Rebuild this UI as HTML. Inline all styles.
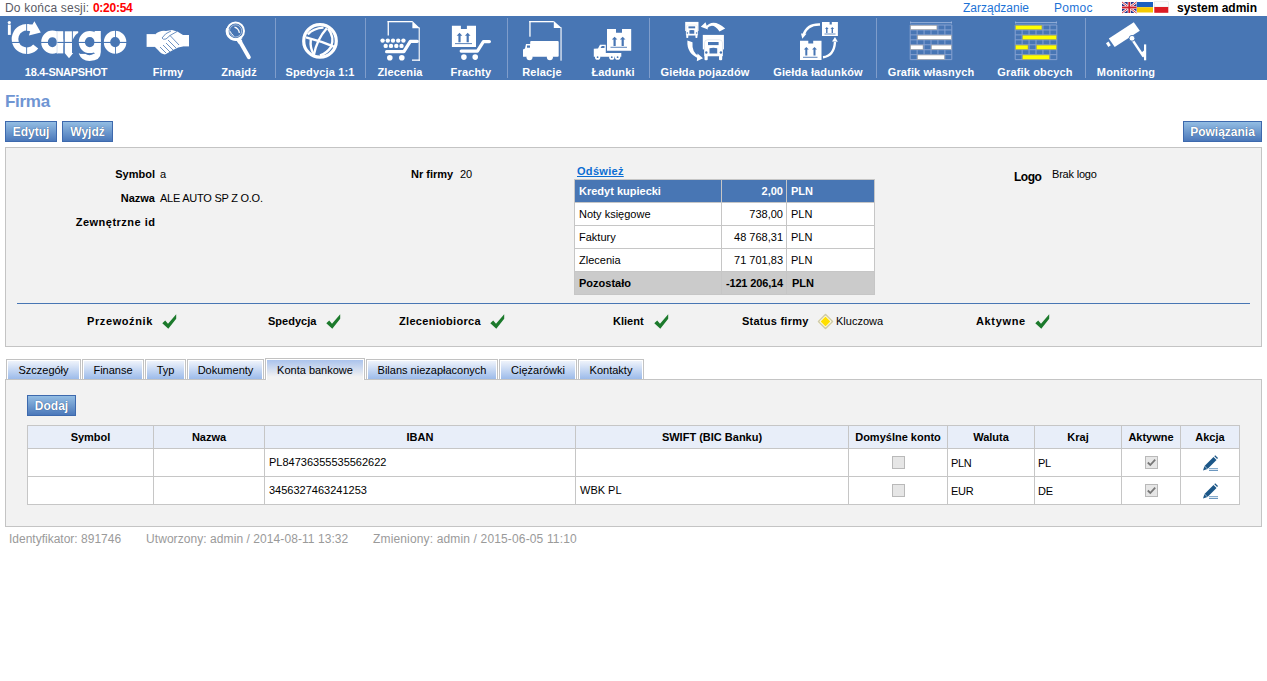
<!DOCTYPE html>
<html><head><meta charset="utf-8">
<style>
*{margin:0;padding:0;box-sizing:border-box}
html,body{width:1267px;height:681px;overflow:hidden;background:#fff;font-family:"Liberation Sans",sans-serif;color:#000}
.abs{position:absolute;white-space:nowrap}
#top{position:absolute;left:0;top:0;width:1267px;height:16px}
#nav{position:absolute;left:0;top:16px;width:1267px;height:64px;background:#4876b4}
.sep{position:absolute;top:2px;width:1px;height:60px;background:#7f9dcb}
.nl{position:absolute;top:50px;letter-spacing:0.15px;font-weight:bold;font-size:11px;color:#fff;white-space:nowrap;line-height:13px;transform:translateX(-50%)}
.ic{position:absolute}
.btn{position:absolute;height:21px;border:1px solid #3d69ad;background:linear-gradient(#93bde3,#4b78ba);color:#fff;font-weight:bold;font-size:12px;line-height:21px;text-align:center;text-shadow:0 0 1px #1f3f73}
.panel{position:absolute;background:#f2f2f2;border:1px solid #c4c4c4}
.lbl{position:absolute;font-weight:bold;font-size:11px;line-height:13px;white-space:nowrap}
.val{position:absolute;font-size:11px;line-height:13px;white-space:nowrap}
.tab{position:absolute;top:359px;height:20px;border:1px solid #c2c2c2;border-bottom:none;background:linear-gradient(#f3f6fc,#9cbbea);box-shadow:inset 1px 1px 0 #fff,inset -1px 0 0 #fff;font-size:11px;line-height:21px;text-align:center;white-space:nowrap}
.tab.act{top:358px;height:22px;background:linear-gradient(#a6c0ec,#f2f2f2 85%);line-height:23px}
table{border-collapse:collapse}
#kt td{white-space:nowrap;border:1px solid #c6c6c6;background:#fff;height:23px;padding:0 4px;line-height:13px}
#kt td.r{text-align:right;padding-right:3px}
#kt tr.h td{background:#4876b4;color:#fff;font-weight:bold}
#kt tr.f td{background:#cbcbcb;font-weight:bold}
.chk{position:absolute;top:314px;width:15px;height:15px}
#bt th{background:#e8eef9;border:1px solid #c6c6c6;height:23px;font-weight:bold;text-align:center;padding:0}
#bt td{background:#fff;border:1px solid #c6c6c6;height:28px;padding:0 4px 2px}
#bt td.c{text-align:center;padding:0}
#bt td.t{padding:1px 0 0 3px;letter-spacing:-0.3px}
.cb{display:inline-block;width:13px;height:13px;border:1px solid #b9b9b9;background:#e6e6e6;vertical-align:middle}
.pen{display:inline-block;width:16px;height:16px;vertical-align:middle}

</style></head><body>
<div id="top">
  <div class="abs" style="left:5px;top:1px;font-size:12px;line-height:14px;color:#5a5a64;letter-spacing:0.2px">Do końca sesji: <b style="color:#f00;letter-spacing:-0.25px">0:20:54</b></div>
  <div class="abs" style="left:963px;top:1px;font-size:12px;line-height:14px;color:#1c72d6">Zarządzanie</div>
  <div class="abs" style="left:1054px;top:1px;font-size:12px;line-height:14px;color:#1c72d6;letter-spacing:0.3px">Pomoc</div>
  <svg class="abs" style="left:1121px;top:0px" width="50" height="15" viewBox="0 0 50 15">
 <g transform="translate(1,2)">
  <rect x="0" y="0" width="14.5" height="11" fill="#27348b"/>
  <path d="M0 0 L14.5 11 M14.5 0 L0 11" stroke="#fff" stroke-width="2.2"/>
  <path d="M0 0 L14.5 11 M14.5 0 L0 11" stroke="#cf1f2d" stroke-width="0.9"/>
  <path d="M7.25 0 V11 M0 5.5 H14.5" stroke="#fff" stroke-width="3.2"/>
  <path d="M7.25 0 V11 M0 5.5 H14.5" stroke="#cf1f2d" stroke-width="1.8"/>
 </g>
 <rect x="16" y="2" width="16" height="5.2" fill="#1b5fbf"/>
 <rect x="16" y="7.2" width="16" height="5.3" fill="#f5c900"/>
 <rect x="33.3" y="1.8" width="14" height="5.2" fill="#fbfbfb" stroke="#dadada" stroke-width="0.5"/>
 <rect x="33.3" y="7" width="14" height="5.8" fill="#dc1c23"/>
</svg>
  <div class="abs" style="left:1177px;top:1px;font-size:12px;line-height:14px;font-weight:bold">system admin</div>
</div>
<div id="nav"><svg style="position:absolute;left:0;top:0" width="1267" height="64" viewBox="0 16 1267 64">
<g fill="#fff" stroke="none">
 <!-- logo i -->
 <circle cx="9.3" cy="22.5" r="1.6"/>
 <rect x="7.9" y="24.6" width="2.9" height="10.3"/>
 <!-- C ring -->
 <path d="M35.7 46.5 A 11.7 11.7 0 1 1 28.7 27.5" fill="none" stroke="#fff" stroke-width="6.6"/>
 <polygon points="34.4,21.2 40.8,32.5 28.9,35.4 30.2,31.2 26.6,30.6 26.6,24.2 32.5,24.6"/>
 <!-- a -->
 <ellipse cx="52.4" cy="42.2" rx="7.9" ry="8.3" fill="none" stroke="#fff" stroke-width="6.6"/>
 <rect x="57" y="31.2" width="6.4" height="22.2"/>
 <!-- r -->
 <rect x="64.6" y="31.3" width="7.4" height="21.8"/>
 <path d="M72.6 31.3 L78.2 31.3 L78.2 33 Q 75 34.5 72.6 40.3 Z"/>
 <polygon points="64.7,53 73.2,53 69,58.2"/>
 <!-- g -->
 <ellipse cx="89.75" cy="42.1" rx="7.95" ry="8.1" fill="none" stroke="#fff" stroke-width="6.1"/>
 <path d="M94.6 31 L100.8 31 L100.8 52 Q100.8 60.9 89.5 60.9 Q81.5 60.9 78.7 53.5 L85 53.5 Q87 55.2 89.5 55.2 Q94.6 55.2 94.6 50 Z"/>
 <!-- o -->
 <ellipse cx="115.1" cy="42.15" rx="8.1" ry="8.35" fill="none" stroke="#fff" stroke-width="6.3"/>
</g>
<g fill="#4876b4">
 <rect x="11.5" y="41.9" width="115.5" height="1.1"/>
 <rect x="26.2" y="23" width="0.9" height="32"/>
 <rect x="115.1" y="30" width="0.9" height="25"/>
 <rect x="63.6" y="30" width="0.9" height="24"/>
 <rect x="71.9" y="30" width="0.7" height="12"/>
 <rect x="80" y="53.2" width="14.6" height="0.8"/>
</g>
<rect x="56.7" y="31" width="0.7" height="23" fill="#c9d6ec"/>
<!-- handshake -->
<g fill="#fff">
 <rect x="146.6" y="34.1" width="8.4" height="12.8"/>
 <rect x="183" y="35" width="6" height="11.4"/>
 <path d="M155 34.5 Q160 30 166 31 L 172 30 Q 178 31 183 35 L183 46.4 Q 178 47 174 49.5 L 165 54.5 Q 161 54 158 50 L 155 46.9 Z"/>
</g>
<g fill="none" stroke="#4876b4" stroke-width="0.8">
 <path d="M171 31 Q 165 33 162 38 Q 163 40 166 39 L 170 35.5 L 179 45 M168 40 L 176 48 M166 43 L 174 51 M163 45 L 170 52 M160 47 L 166 53 M170 35.5 L 177 31.5"/>
</g>
<!-- magnifier -->
<circle cx="235.6" cy="30.9" r="8.4" fill="none" stroke="#fff" stroke-width="2"/>
<path d="M241.5 37 A 8.4 8.4 0 0 1 227.5 28.5" fill="none" stroke="#fff" stroke-width="3"/>
<circle cx="235.6" cy="30.9" r="6.1" fill="none" stroke="#fff" stroke-width="0.7" opacity="0.75"/>
<path d="M234.5 27.2 Q 238.6 28.4 239.4 32.8" fill="none" stroke="#fff" stroke-width="1.3"/>
<path d="M230.2 31.3 Q 231 34 233.6 35.6" fill="none" stroke="#fff" stroke-width="1"/>
<line x1="239.2" y1="40.2" x2="248.9" y2="57.3" stroke="#fff" stroke-width="3.8" stroke-linecap="round"/>
<line x1="238" y1="38.5" x2="240.5" y2="42.5" stroke="#fff" stroke-width="4.6"/>
<!-- globe -->
<circle cx="320" cy="40.9" r="16.3" fill="none" stroke="#fff" stroke-width="3.2"/>
<g fill="none" stroke="#fff" stroke-width="2.4">
 <path d="M307.8 34.5 Q 313 28.2 323.5 27.6"/>
 <path d="M326.8 28.2 Q 317 39 313.8 55"/>
 <path d="M328 28.5 Q 335 37 331 47 Q 327 53 320 55.5"/>
 <path d="M306 37.3 Q 321 41 335.8 47.3"/>
 <path d="M310.8 39.5 Q 309.8 48 313.8 54.5"/>
</g>
<!-- Zlecenia doc+cart -->
<g fill="#fff">
 <rect x="387.6" y="21" width="1.3" height="14.5"/>
 <rect x="387.6" y="21" width="25" height="1.3"/>
 <polygon points="412.4,21 419.9,28.2 412.4,28.2"/>
 <rect x="418.6" y="27.5" width="1.3" height="33.3" opacity="0.85"/>
 <rect x="412" y="59.5" width="7.9" height="1.3"/>
 <circle cx="382.6" cy="40.6" r="2.2"/><circle cx="387.8" cy="40.6" r="2.2"/><circle cx="393" cy="40.6" r="2.2"/><circle cx="398.2" cy="40.6" r="2.2"/><circle cx="403.4" cy="40.6" r="2.2"/>
 <circle cx="385.7" cy="45.9" r="2.2"/><circle cx="391" cy="45.9" r="2.2"/><circle cx="396.3" cy="45.9" r="2.2"/><circle cx="401.5" cy="45.9" r="2.2"/>
 <circle cx="389.8" cy="57.8" r="2.8"/><circle cx="401.8" cy="57.8" r="2.8"/>
</g>
<path d="M386.6 51.7 L 403.9 51.7 L 410.3 41.3 L 417.3 41.3" fill="none" stroke="#fff" stroke-width="3.2" stroke-linecap="round" stroke-linejoin="round"/>

<!-- Frachty -->
<path fill="#fff" d="M451.9 25.8 L460.9 25.8 L460.9 28.9 L466.9 28.9 L466.9 25.8 L476 25.8 L476 46.9 L451.9 46.9 Z"/>
<g fill="#4876b4">
 <path d="M459.5 32.8 L462.3 35.8 L460.6 35.8 L460.6 42.3 L458.4 42.3 L458.4 35.8 L456.7 35.8 Z"/>
 <path d="M467.7 32.8 L470.5 35.8 L468.8 35.8 L468.8 42.3 L466.6 42.3 L466.6 35.8 L464.9 35.8 Z"/>
 <rect x="455" y="43.2" width="17" height="0.9"/>
</g>
<path d="M461.2 51.1 L 477.4 51.1 L 483.4 41.6 L 489.4 41.6" fill="none" stroke="#fff" stroke-width="3.2" stroke-linecap="round" stroke-linejoin="round"/>
<circle cx="463.9" cy="57.1" r="2.8" fill="#fff"/><circle cx="475.2" cy="57.1" r="2.8" fill="#fff"/>

<!-- Relacje -->
<g fill="#fff">
 <rect x="529.3" y="21" width="1.3" height="15.7"/>
 <rect x="529.3" y="21" width="24.5" height="1.3"/>
 <polygon points="553.8,21 561.7,28 553.8,28"/>
 <rect x="560.4" y="27.5" width="1.3" height="33.2" opacity="0.85"/>
 <rect x="530.2" y="40.9" width="28.5" height="15.9" rx="1"/>
 <path d="M523 49.5 L525 48.5 L526 44 L531 44 L531 56.8 L523 56.8 Z"/>
 <circle cx="529.5" cy="57.3" r="3"/><circle cx="549.9" cy="57.3" r="3"/>
</g>
<rect x="527" y="45.5" width="3" height="2.2" fill="#4876b4"/>

<!-- Ladunki -->
<path fill="#fff" d="M607 28.9 L616 28.9 L616 32.8 L622 32.8 L622 28.9 L631.2 28.9 L631.2 50.8 L607 50.8 Z"/>
<g fill="#4876b4">
 <path d="M614.6 36.7 L617.4 39.6 L615.7 39.6 L615.7 45.9 L613.5 45.9 L613.5 39.6 L611.8 39.6 Z"/>
 <path d="M622.7 36.7 L625.5 39.6 L623.8 39.6 L623.8 45.9 L621.6 45.9 L621.6 39.6 L619.9 39.6 Z"/>
 <rect x="610.5" y="46.8" width="16.5" height="0.9"/>
</g>
<g fill="#fff">
 <path d="M593.8 48.8 L598 48.5 L600 44.8 L605.8 44.8 L605.8 52.9 L621.3 52.9 L621.3 56.8 L593.8 56.8 Z"/>
 <circle cx="597.6" cy="57.2" r="2.6"/><circle cx="611.8" cy="57.2" r="2.6"/><circle cx="617.6" cy="57.2" r="2.6"/>
</g>
<g fill="#4876b4"><circle cx="597.6" cy="57.2" r="0.9"/><circle cx="611.8" cy="57.2" r="0.9"/><circle cx="617.6" cy="57.2" r="0.9"/>
<path d="M600.5 48 L601.8 46 L604.5 46 L604.5 48 Z"/></g>

<!-- Gielda pojazdow -->
<g>
 <rect x="702.80" y="34.90" width="21.10" height="14.50" fill="#fff"/>
 <path d="M704.50 56.00 L704.50 43.00 Q704.50 39.80 707.50 39.80 L719.50 39.80 Q722.50 39.80 722.50 43.00 L722.50 56.00 Z" fill="#fff" stroke="#d9dfe8" stroke-width="0.70"/>
 <rect x="704.50" y="49.40" width="18.00" height="6.60" fill="#fff"/>
 <rect x="708.00" y="42.00" width="10.60" height="3.10" fill="#4876b4"/>
 <path d="M709.50 53.60 L709.50 48.30 Q713.35 47.20 717.20 48.30 L717.20 53.60 Z" fill="#4876b4"/>
 <circle cx="706.30" cy="52.50" r="1.20" fill="#4876b4"/>
 <circle cx="720.90" cy="52.50" r="1.20" fill="#4876b4"/>
 <rect x="704.50" y="55.50" width="3.20" height="4.80" rx="1.00" fill="#fff"/>
 <rect x="719.00" y="55.50" width="3.20" height="4.80" rx="1.00" fill="#fff"/>
</g>
<g>
 <rect x="685.20" y="21.90" width="13.29" height="9.13" fill="#fff"/>
 <path d="M686.27 35.19 L686.27 27.00 Q686.27 24.99 688.16 24.99 L695.72 24.99 Q697.61 24.99 697.61 27.00 L697.61 35.19 Z" fill="#fff" stroke="#d9dfe8" stroke-width="0.44"/>
 <rect x="686.27" y="31.03" width="11.34" height="4.16" fill="#fff"/>
 <rect x="688.48" y="26.37" width="6.68" height="1.95" fill="#4876b4"/>
 <path d="M689.42 33.68 L689.42 30.34 Q691.85 29.65 694.27 30.34 L694.27 33.68 Z" fill="#4876b4"/>
 <circle cx="687.41" cy="32.99" r="0.76" fill="#4876b4"/>
 <circle cx="696.60" cy="32.99" r="0.76" fill="#4876b4"/>
 <rect x="686.27" y="34.88" width="2.02" height="3.02" rx="0.63" fill="#fff"/>
 <rect x="695.41" y="34.88" width="2.02" height="3.02" rx="0.63" fill="#fff"/>
</g>
<path fill="#fff" d="M705 27.5 Q 713 17.5 725.2 28.6 L 719.5 31.5 Q 713 22 706.8 28.5 Z"/>
<polygon fill="#fff" points="700.8,26.8 705.5,22.3 708,29.5"/>
<path fill="#fff" d="M687.4 40.6 Q 686.5 54 699 58.5 L 699.5 56.5 Q 691.5 53 692.5 42.3 Z"/>
<polygon fill="#fff" points="703,58.2 697.5,53.5 696.8,61.2"/>
<!-- Gielda ladunkow -->
<path fill="#fff" d="M822 21.9 L829.6 21.9 L829.6 24.5 L831.8 24.5 L831.8 21.9 L837.9 21.9 L837.9 36 L822 36 Z"/>
<path fill="#fff" d="M800 40.7 L808.3 40.7 L808.3 43.5 L813.2 43.5 L813.2 40.7 L821.5 40.7 L821.5 60.1 L800 60.1 Z"/>
<g fill="#4876b4">
 <path d="M826.8 27 L828.6 29 L827.5 29 L827.5 33 L826.1 33 L826.1 29 L825 29 Z"/>
 <path d="M832.3 27 L834.1 29 L833 29 L833 33 L831.6 33 L831.6 29 L830.5 29 Z"/>
 <rect x="824.5" y="33.6" width="11" height="0.8"/>
 <path d="M806.3 47 L808.8 49.6 L807.3 49.6 L807.3 55.5 L805.3 55.5 L805.3 49.6 L803.8 49.6 Z"/>
 <path d="M814.5 47 L817 49.6 L815.5 49.6 L815.5 55.5 L813.5 55.5 L813.5 49.6 L812 49.6 Z"/>
 <rect x="803" y="56.8" width="14.5" height="0.9"/>
</g>
<g fill="none" stroke="#fff">
 <path d="M820 24.5 Q 807 24 803.5 35" stroke-width="2.4"/>
 <path d="M823 57.2 Q 834 56 835 42" stroke-width="2.4"/>
</g>
<polygon fill="#fff" points="801,33.5 806.5,33.8 802.3,38.8"/>
<polygon fill="#fff" points="832,41.5 837.8,41.8 835,37"/>

<!-- Grafik -->
<g><rect x="910.2" y="22.2" width="41.6" height="0.9" fill="#9fb6dd"/><rect x="910.2" y="21.5" width="0.9" height="2" fill="#9fb6dd"/><rect x="950.9000000000001" y="21.5" width="0.9" height="2" fill="#9fb6dd"/><rect x="909.70" y="25" width="1" height="34.6" fill="#86a2d2"/><rect x="916.63" y="25" width="1" height="34.6" fill="#86a2d2"/><rect x="923.57" y="25" width="1" height="34.6" fill="#86a2d2"/><rect x="930.50" y="25" width="1" height="34.6" fill="#86a2d2"/><rect x="937.43" y="25" width="1" height="34.6" fill="#86a2d2"/><rect x="944.37" y="25" width="1" height="34.6" fill="#86a2d2"/><rect x="951.30" y="25" width="1" height="34.6" fill="#86a2d2"/><rect x="910.2" y="24.50" width="41.6" height="1" fill="#86a2d2"/><rect x="910.2" y="29.44" width="41.6" height="1" fill="#86a2d2"/><rect x="910.2" y="34.39" width="41.6" height="1" fill="#86a2d2"/><rect x="910.2" y="39.33" width="41.6" height="1" fill="#86a2d2"/><rect x="910.2" y="44.27" width="41.6" height="1" fill="#86a2d2"/><rect x="910.2" y="49.21" width="41.6" height="1" fill="#86a2d2"/><rect x="910.2" y="54.16" width="41.6" height="1" fill="#86a2d2"/><rect x="910.2" y="59.10" width="41.6" height="1" fill="#86a2d2"/><rect x="910.50" y="25.30" width="26.44" height="4.34" fill="#fff" stroke="#9a9a9a" stroke-width="0.6"/><rect x="917.43" y="35.19" width="34.07" height="4.34" fill="#fff" stroke="#9a9a9a" stroke-width="0.6"/><rect x="910.50" y="45.07" width="12.57" height="4.34" fill="#fff" stroke="#9a9a9a" stroke-width="0.6"/><rect x="931.30" y="45.07" width="20.20" height="4.34" fill="#fff" stroke="#9a9a9a" stroke-width="0.6"/><rect x="917.43" y="54.96" width="27.13" height="4.34" fill="#fff" stroke="#9a9a9a" stroke-width="0.6"/></g>
<g><rect x="1015.2" y="22.2" width="41.6" height="0.9" fill="#9fb6dd"/><rect x="1015.2" y="21.5" width="0.9" height="2" fill="#9fb6dd"/><rect x="1055.8999999999999" y="21.5" width="0.9" height="2" fill="#9fb6dd"/><rect x="1014.70" y="25" width="1" height="34.6" fill="#86a2d2"/><rect x="1021.63" y="25" width="1" height="34.6" fill="#86a2d2"/><rect x="1028.57" y="25" width="1" height="34.6" fill="#86a2d2"/><rect x="1035.50" y="25" width="1" height="34.6" fill="#86a2d2"/><rect x="1042.43" y="25" width="1" height="34.6" fill="#86a2d2"/><rect x="1049.37" y="25" width="1" height="34.6" fill="#86a2d2"/><rect x="1056.30" y="25" width="1" height="34.6" fill="#86a2d2"/><rect x="1015.2" y="24.50" width="41.6" height="1" fill="#86a2d2"/><rect x="1015.2" y="29.44" width="41.6" height="1" fill="#86a2d2"/><rect x="1015.2" y="34.39" width="41.6" height="1" fill="#86a2d2"/><rect x="1015.2" y="39.33" width="41.6" height="1" fill="#86a2d2"/><rect x="1015.2" y="44.27" width="41.6" height="1" fill="#86a2d2"/><rect x="1015.2" y="49.21" width="41.6" height="1" fill="#86a2d2"/><rect x="1015.2" y="54.16" width="41.6" height="1" fill="#86a2d2"/><rect x="1015.2" y="59.10" width="41.6" height="1" fill="#86a2d2"/><rect x="1015.50" y="25.30" width="26.44" height="4.34" fill="#ffff00" stroke="#a0a060" stroke-width="0.6"/><rect x="1022.43" y="35.19" width="34.07" height="4.34" fill="#ffff00" stroke="#a0a060" stroke-width="0.6"/><rect x="1015.50" y="45.07" width="12.57" height="4.34" fill="#ffff00" stroke="#a0a060" stroke-width="0.6"/><rect x="1036.30" y="45.07" width="20.20" height="4.34" fill="#ffff00" stroke="#a0a060" stroke-width="0.6"/><rect x="1022.43" y="54.96" width="27.13" height="4.34" fill="#ffff00" stroke="#a0a060" stroke-width="0.6"/></g>
<!-- camera -->
<polygon fill="#fff" points="1108.8,38.5 1133.8,22.2 1139.8,30.7 1114.7,46.9"/>
<polygon fill="#fff" points="1106,43.2 1108.5,41.5 1110.8,45.3 1108.3,47"/>
<line x1="1132.5" y1="40" x2="1143.5" y2="56.5" stroke="#fff" stroke-width="2.3"/>
<circle cx="1132" cy="38.3" r="2.9" fill="#fff" stroke="#4876b4" stroke-width="0.9"/>
<rect x="1144" y="44.4" width="2.2" height="15.9" fill="#fff"/>
<polygon fill="#fff" points="1141,53 1144.5,50 1144.5,58.5"/>
</svg>
  <div class="sep" style="left:275px"></div>
  <div class="sep" style="left:365px"></div>
  <div class="sep" style="left:507px"></div>
  <div class="sep" style="left:649px"></div>
  <div class="sep" style="left:876px"></div>
  <div class="sep" style="left:1085px"></div>
  <div class="nl" style="left:66px;letter-spacing:-0.3px">18.4-SNAPSHOT</div>
  <div class="nl" style="left:168px">Firmy</div>
  <div class="nl" style="left:239px">Znajdź</div>
  <div class="nl" style="left:320px">Spedycja 1:1</div>
  <div class="nl" style="left:400px">Zlecenia</div>
  <div class="nl" style="left:471px">Frachty</div>
  <div class="nl" style="left:542px">Relacje</div>
  <div class="nl" style="left:613px">Ładunki</div>
  <div class="nl" style="left:705px">Giełda pojazdów</div>
  <div class="nl" style="left:818px">Giełda ładunków</div>
  <div class="nl" style="left:931px">Grafik własnych</div>
  <div class="nl" style="left:1035px">Grafik obcych</div>
  <div class="nl" style="left:1126px">Monitoring</div>
</div>

<div class="abs" style="left:5px;top:92px;font-size:17px;line-height:20px;font-weight:bold;color:#6f95d3;letter-spacing:-0.3px">Firma</div>
<div class="btn" style="left:5px;top:121px;width:52px">Edytuj</div>
<div class="btn" style="left:62px;top:121px;width:51px">Wyjdź</div>
<div class="btn" style="left:1183px;top:121px;width:79px">Powiązania</div>

<div class="panel" style="left:5px;top:147px;width:1257px;height:200px"></div>
<div class="lbl" style="right:1112px;top:168px">Symbol</div>
<div class="val" style="left:160px;top:168px">a</div>
<div class="lbl" style="right:1112px;top:192px">Nazwa</div>
<div class="val" style="left:160px;top:192px;letter-spacing:-0.25px">ALE AUTO SP Z O.O.</div>
<div class="lbl" style="right:1112px;top:216px;letter-spacing:0.5px;margin-right:-0.5px">Zewnętrzne id</div>
<div class="lbl" style="left:411px;top:168px">Nr firmy</div>
<div class="val" style="left:460px;top:168px">20</div>
<div class="abs" style="left:577px;top:165px;font-size:11px;line-height:13px;font-weight:bold;color:#0b6dd3;text-decoration:underline;letter-spacing:0.3px">Odśwież</div>
<table id="kt" style="position:absolute;left:574px;top:179px;width:300px;font-size:11px;table-layout:fixed">
<tr class="h"><td style="width:147px">Kredyt kupiecki</td><td class="r" style="width:65px">2,00</td><td style="width:88px">PLN</td></tr>
<tr><td>Noty księgowe</td><td class="r">738,00</td><td class="t">PLN</td></tr>
<tr><td>Faktury</td><td class="r">48 768,31</td><td class="t">PLN</td></tr>
<tr><td>Zlecenia</td><td class="r">71 701,83</td><td class="t">PLN</td></tr>
<tr class="f"><td>Pozostało</td><td class="r" style="letter-spacing:-0.15px;padding:0 3px 0 0">-121 206,14</td><td style="padding-left:5px">PLN</td></tr>
</table>
<div class="lbl" style="left:1014px;top:171px;font-size:12px;letter-spacing:-0.5px">Logo</div>
<div class="val" style="left:1052px;top:168px;letter-spacing:-0.2px">Brak logo</div>
<div class="abs" style="left:17px;top:303px;width:1233px;height:1px;background:#4876b4"></div>
<div class="lbl" style="left:87px;top:315px;letter-spacing:0.6px">Przewoźnik</div><div class="chk" style="left:162px"><svg width="15" height="15" viewBox="0 0 15 15"><path d="M0.3 9.3 L3.2 6.6 L6 9.8 L14.2 0.3 L14.2 4.8 L6.3 14.7 Z" fill="#1c7a2c"/></svg></div>
<div class="lbl" style="left:268px;top:315px">Spedycja</div><div class="chk" style="left:326px"><svg width="15" height="15" viewBox="0 0 15 15"><path d="M0.3 9.3 L3.2 6.6 L6 9.8 L14.2 0.3 L14.2 4.8 L6.3 14.7 Z" fill="#1c7a2c"/></svg></div>
<div class="lbl" style="left:399px;top:315px;letter-spacing:0.3px">Zleceniobiorca</div><div class="chk" style="left:490px"><svg width="15" height="15" viewBox="0 0 15 15"><path d="M0.3 9.3 L3.2 6.6 L6 9.8 L14.2 0.3 L14.2 4.8 L6.3 14.7 Z" fill="#1c7a2c"/></svg></div>
<div class="lbl" style="left:613px;top:315px">Klient</div><div class="chk" style="left:654px"><svg width="15" height="15" viewBox="0 0 15 15"><path d="M0.3 9.3 L3.2 6.6 L6 9.8 L14.2 0.3 L14.2 4.8 L6.3 14.7 Z" fill="#1c7a2c"/></svg></div>
<div class="lbl" style="left:742px;top:315px;letter-spacing:0.25px">Status firmy</div>
<div class="abs" style="left:820px;top:316px;width:11px;height:11px;transform:rotate(45deg);background:#ffdf00;border:1px solid #c3c3c3;box-shadow:inset 0 0 0 1px #fff"></div>
<div class="val" style="left:836px;top:315px">Kluczowa</div>
<div class="lbl" style="left:976px;top:315px;letter-spacing:0.65px">Aktywne</div><div class="chk" style="left:1035px"><svg width="15" height="15" viewBox="0 0 15 15"><path d="M0.3 9.3 L3.2 6.6 L6 9.8 L14.2 0.3 L14.2 4.8 L6.3 14.7 Z" fill="#1c7a2c"/></svg></div>

<div class="panel" style="left:5px;top:379px;width:1257px;height:148px"></div>
<div class="tab" style="left:6px;width:75px">Szczegóły</div>
<div class="tab" style="left:82px;width:62px">Finanse</div>
<div class="tab" style="left:145px;width:41px">Typ</div>
<div class="tab" style="left:187px;width:77px">Dokumenty</div>
<div class="tab act" style="left:265px;width:100px">Konta bankowe</div>
<div class="tab" style="left:366px;width:132px">Bilans niezapłaconych</div>
<div class="tab" style="left:499px;width:78px">Ciężarówki</div>
<div class="tab" style="left:578px;width:66px">Kontakty</div>
<div class="btn" style="left:27px;top:395px;width:49px">Dodaj</div>
<table id="bt" style="position:absolute;left:27px;top:425px;width:1213px;font-size:11px">
<tr class="h"><th style="width:126px">Symbol</th><th style="width:111px">Nazwa</th><th style="width:311px">IBAN</th><th style="width:273px">SWIFT (BIC Banku)</th><th style="width:99px">Domyślne konto</th><th style="width:87px">Waluta</th><th style="width:87px">Kraj</th><th style="width:59px">Aktywne</th><th>Akcja</th></tr>
<tr><td></td><td></td><td>PL84736355535562622</td><td></td><td class="c"><span class="cb"></span></td><td class="t">PLN</td><td class="t">PL</td><td class="c"><span class="cb on"><svg width="11" height="11" viewBox="0 0 11 11" style="display:block"><path d="M1.8 5.5 L4.3 8 L9.2 2.6" fill="none" stroke="#777" stroke-width="1.8"/></svg></span></td><td class="c"><span class="pen"><svg width="16" height="16" viewBox="0 0 16 16"><path d="M1 15.5 L2.5 11 L11.5 2 L14.5 5 L5.5 14 Z" fill="#1b5687"/><path d="M12.3 1.2 L13.2 0.3 L16 3.1 L15.1 4 Z" fill="#1b5687"/><path d="M2.5 11 L5.5 14" stroke="#fff" stroke-width="0.6"/><rect x="7" y="13.2" width="9" height="1" fill="#6c98c0"/><rect x="7" y="15" width="9" height="1" fill="#6c98c0"/></svg></span></td></tr>
<tr><td></td><td></td><td>3456327463241253</td><td>WBK PL</td><td class="c"><span class="cb"></span></td><td class="t">EUR</td><td class="t">DE</td><td class="c"><span class="cb on"><svg width="11" height="11" viewBox="0 0 11 11" style="display:block"><path d="M1.8 5.5 L4.3 8 L9.2 2.6" fill="none" stroke="#777" stroke-width="1.8"/></svg></span></td><td class="c"><span class="pen"><svg width="16" height="16" viewBox="0 0 16 16"><path d="M1 15.5 L2.5 11 L11.5 2 L14.5 5 L5.5 14 Z" fill="#1b5687"/><path d="M12.3 1.2 L13.2 0.3 L16 3.1 L15.1 4 Z" fill="#1b5687"/><path d="M2.5 11 L5.5 14" stroke="#fff" stroke-width="0.6"/><rect x="7" y="13.2" width="9" height="1" fill="#6c98c0"/><rect x="7" y="15" width="9" height="1" fill="#6c98c0"/></svg></span></td></tr>
</table>
<div class="abs" style="left:9px;top:532px;font-size:12px;line-height:14px;color:#9a9a9a">Identyfikator: 891746</div>
<div class="abs" style="left:146px;top:532px;font-size:12px;line-height:14px;color:#9a9a9a;letter-spacing:0.07px">Utworzony: admin / 2014-08-11 13:32</div>
<div class="abs" style="left:373px;top:532px;font-size:12px;line-height:14px;color:#9a9a9a;letter-spacing:0.15px">Zmieniony: admin / 2015-06-05 11:10</div>

</body></html>
